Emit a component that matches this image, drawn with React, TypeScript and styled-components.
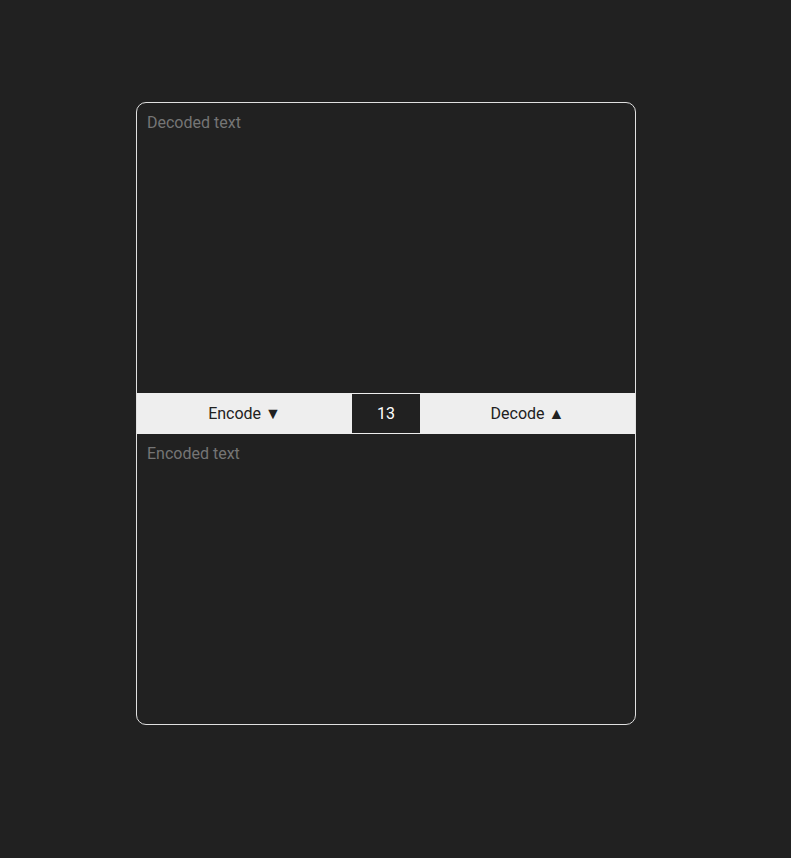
import styled, { createGlobalStyle } from 'styled-components'

const GlobalStyle = createGlobalStyle`
  html, body {
    margin: 0;
    padding: 0;
    background: #212121;
    font-family: Roboto, 'Liberation Sans', sans-serif;
  }
`

const Page = styled.div`
  min-height: 858px;
  padding: 102px 0 0 136px;
  box-sizing: border-box;
`

const Card = styled.div`
  width: 500px;
  height: 623px;
  box-sizing: border-box;
  border: 1px solid #e0e0e0;
  border-radius: 10px;
  overflow: hidden;
  display: flex;
  flex-direction: column;
  background: #212121;
`

const TextArea = styled.textarea`
  flex: 1;
  resize: none;
  border: none;
  outline: none;
  background: transparent;
  color: #eeeeee;
  font-family: Roboto, 'Liberation Sans', sans-serif;
  font-size: 16px;
  padding: 10px 10px;
  margin: 0;

  &::placeholder {
    color: #757575;
  }
`

const Bar = styled.div`
  height: 41px;
  flex: none;
  display: grid;
  grid-template-columns: 1fr 68px 1fr;
  background: #eeeeee;
`

const BarButton = styled.button`
  border: none;
  background: transparent;
  color: #212121;
  font-family: Roboto, 'Liberation Sans', sans-serif;
  font-size: 16px;
  cursor: pointer;
  padding: 0;
`

const Shift = styled.input`
  margin: 1px 0;
  border: none;
  outline: none;
  background: #212121;
  color: #ffffff;
  text-align: center;
  font-family: Roboto, 'Liberation Sans', sans-serif;
  font-size: 16px;
  padding: 0;
  width: 68px;
  box-sizing: border-box;
`

export default function App() {
  return (
    <Page>
      <GlobalStyle />
      <Card>
        <TextArea placeholder="Decoded text" />
        <Bar>
          <BarButton>Encode ▼</BarButton>
          <Shift type="text" defaultValue="13" />
          <BarButton>Decode ▲</BarButton>
        </Bar>
        <TextArea placeholder="Encoded text" />
      </Card>
    </Page>
  )
}
